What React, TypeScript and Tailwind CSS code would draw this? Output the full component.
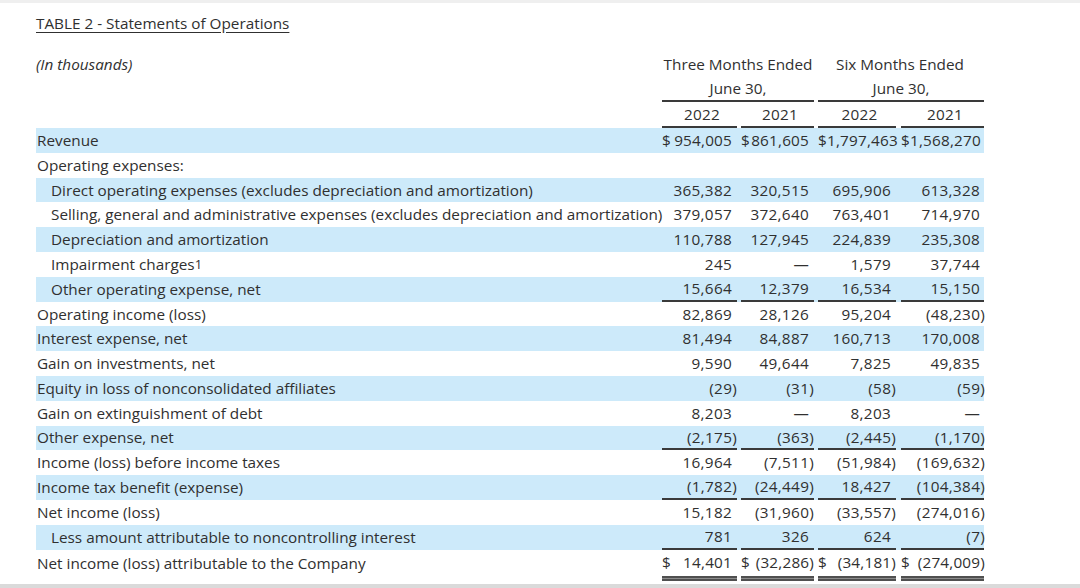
import React from "react";

type Row = {
    label: React.ReactNode;
    values?: string[];
    indent?: boolean;
    hl?: boolean;
    line?: boolean;
    dollar?: boolean;
    double?: boolean;
};

const rows: Row[] = [
    { label: "Revenue", values: ["$954,005", "$861,605", "$1,797,463", "$1,568,270"], hl: true, dollar: true },
    { label: "Operating expenses:" },
    { label: "Direct operating expenses (excludes depreciation and amortization)", values: ["365,382", "320,515", "695,906", "613,328"], indent: true, hl: true },
    { label: "Selling, general and administrative expenses (excludes depreciation and amortization)", values: ["379,057", "372,640", "763,401", "714,970"], indent: true },
    { label: "Depreciation and amortization", values: ["110,788", "127,945", "224,839", "235,308"], indent: true, hl: true },
    {
        label: (
            <>
                Impairment charges<span className="text-[13px]">1</span>
            </>
        ),
        values: ["245", "—", "1,579", "37,744"],
        indent: true,
    },
    { label: "Other operating expense, net", values: ["15,664", "12,379", "16,534", "15,150"], indent: true, hl: true, line: true },
    { label: "Operating income (loss)", values: ["82,869", "28,126", "95,204", "(48,230)"] },
    { label: "Interest expense, net", values: ["81,494", "84,887", "160,713", "170,008"], hl: true },
    { label: "Gain on investments, net", values: ["9,590", "49,644", "7,825", "49,835"] },
    { label: "Equity in loss of nonconsolidated affiliates", values: ["(29)", "(31)", "(58)", "(59)"], hl: true },
    { label: "Gain on extinguishment of debt", values: ["8,203", "—", "8,203", "—"] },
    { label: "Other expense, net", values: ["(2,175)", "(363)", "(2,445)", "(1,170)"], hl: true, line: true },
    { label: "Income (loss) before income taxes", values: ["16,964", "(7,511)", "(51,984)", "(169,632)"] },
    { label: "Income tax benefit (expense)", values: ["(1,782)", "(24,449)", "18,427", "(104,384)"], hl: true, line: true },
    { label: "Net income (loss)", values: ["15,182", "(31,960)", "(33,557)", "(274,016)"] },
    { label: "Less amount attributable to noncontrolling interest", values: ["781", "326", "624", "(7)"], indent: true, hl: true, line: true },
    { label: "Net income (loss) attributable to the Company", values: ["$ 14,401", "$ (32,286)", "$ (34,181)", "$ (274,009)"], dollar: true, double: true },
];

// column boxes: margin classes give the little gaps between the rules
const colWidths = ["w-[79px]", "w-[77px]", "w-[82px]", "w-[86px]"];
const colMargins = ["mx-[2px]", "mx-[2px]", "mx-[2px]", "ml-[3px]"];
const colPad = ["pr-[5px]", "pr-[5px]", "pr-[5px]", "pr-[4px]"];

const Num = ({ v }: { v: string }) => {
    if (v.endsWith(")")) {
        return (
            <span>
                {v.slice(0, -1)}
                <span className="-mr-[5px]">)</span>
            </span>
        );
    }
    return <span>{v}</span>;
};

const Cell = ({ v, i, row }: { v?: string; i: number; row: Row }) => {
    let content: React.ReactNode = null;
    if (v !== undefined) {
        if (row.dollar && v.startsWith("$")) {
            const rest = v.slice(1).trim();
            content = (
                <div className="flex w-full justify-between tracking-[0.2px]">
                    <span>$</span>
                    <Num v={rest} />
                </div>
            );
        } else {
            content = (
                <div className="flex w-full justify-end tracking-[0.3px]">
                    <Num v={v} />
                </div>
            );
        }
    }
    if (row.double) {
        return (
            <div className={`${colWidths[i]} shrink-0 flex flex-col`}>
                <div className={`flex-1 ${colMargins[i]} ${colPad[i]} flex items-center`}>{content}</div>
                <div className={`${colMargins[i]} h-[2px] shrink-0 bg-[#505050]`} />
                <div className={`${colMargins[i]} h-[1px] shrink-0 bg-[#8c8c8c]`} />
                <div className={`${colMargins[i]} h-[2px] shrink-0 bg-[#505050]`} />
            </div>
        );
    }
    return (
        <div className={`${colWidths[i]} shrink-0 flex`}>
            <div
                className={`flex-1 ${colMargins[i]} ${colPad[i]} ${row.line ? "border-b-2 border-[#3a3a3a]" : ""} flex items-center`}
            >
                {content}
            </div>
        </div>
    );
};

export default function App() {
    return (
        <div
            className="w-[1080px] h-[588px] bg-white flex flex-col border-t-[3px] border-[#efefef] text-[#303030] text-[15.3px]"
            style={{ fontFamily: "'Open Sans', Lato, sans-serif" }}
        >
            <div className="pl-[36px] pt-[10px] h-[20px] box-content leading-[20px] shrink-0">
                <span className="underline underline-offset-[3px]">TABLE 2 - Statements of Operations</span>
            </div>

            <div className="ml-[36px] mt-[19px] w-[948px] flex flex-col shrink-0">
                {/* header */}
                <div className="flex h-[24px] items-center">
                    <div className="w-[624px] shrink-0 italic">(In thousands)</div>
                    <div className="w-[156px] shrink-0 text-center">Three Months Ended</div>
                    <div className="w-[168px] shrink-0 text-center">Six Months Ended</div>
                </div>
                <div className="flex h-[26px]">
                    <div className="w-[624px] shrink-0" />
                    <div className="w-[156px] shrink-0 flex">
                        <div className="flex-1 mx-[2px] border-b-2 border-[#3a3a3a] flex items-center justify-center">June 30,</div>
                    </div>
                    <div className="w-[168px] shrink-0 flex">
                        <div className="flex-1 ml-[2px] border-b-2 border-[#3a3a3a] flex items-center justify-center">June 30,</div>
                    </div>
                </div>
                <div className="flex h-[26px]">
                    <div className="w-[624px] shrink-0" />
                    {["2022", "2021", "2022", "2021"].map((y, i) => (
                        <div key={i} className={`${colWidths[i]} shrink-0 flex`}>
                            <div className={`flex-1 ${colMargins[i]} pl-[5px] border-b-2 border-[#3a3a3a] flex items-center justify-center tracking-[0.3px]`}>
                                {y}
                            </div>
                        </div>
                    ))}
                </div>

                {/* body */}
                {rows.map((row, r) => (
                    <div
                        key={r}
                        className={`flex shrink-0 ${row.double ? "h-[31px]" : "h-[24.8px]"} ${row.hl ? "bg-[#cdeafa]" : ""}`}
                    >
                        <div className={`w-[624px] shrink-0 flex items-center ${row.indent ? "pl-[15px]" : "pl-[1px]"} whitespace-nowrap ${row.double ? "pb-[4px]" : ""}`}>
                            {row.label}
                        </div>
                        {[0, 1, 2, 3].map((i) => (
                            <Cell key={i} i={i} v={row.values?.[i]} row={row} />
                        ))}
                    </div>
                ))}
            </div>

            <div className="mt-auto h-[4px] shrink-0 bg-[#dadada]" />
        </div>
    );
}
